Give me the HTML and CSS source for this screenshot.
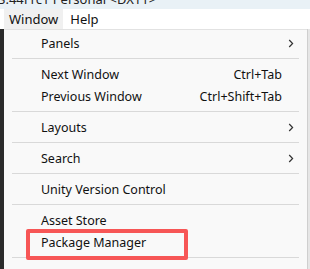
FILE: index.html
```html
<!DOCTYPE html>
<html>
<head>
    <title>Window Menu</title>
    <link rel="stylesheet" href="styles.css">
</head>
<body>
    <div class="titlebar"><span>3.44f1c1 Personal &lt;DX11&gt;</span></div>

    <div class="menubar">
        <span class="mb-item active">Window</span>
        <span class="mb-item">Help</span>
    </div>

    <div class="workspace">
        <div class="dock"></div>
        <div class="menu">
            <div class="item"><span class="label">Panels</span><span class="key"></span><span class="arrow"><svg width="6" height="9" viewBox="0 0 6 9"><path d="M1.2 1 L4.6 4.5 L1.2 8" fill="none" stroke="#333" stroke-width="1.2"/></svg></span></div>
            <div class="sep"></div>
            <div class="item"><span class="label">Next Window</span><span class="key">Ctrl+Tab</span><span class="arrow"></span></div>
            <div class="item"><span class="label">Previous Window</span><span class="key">Ctrl+Shift+Tab</span><span class="arrow"></span></div>
            <div class="sep"></div>
            <div class="item"><span class="label">Layouts</span><span class="key"></span><span class="arrow"><svg width="6" height="9" viewBox="0 0 6 9"><path d="M1.2 1 L4.6 4.5 L1.2 8" fill="none" stroke="#333" stroke-width="1.2"/></svg></span></div>
            <div class="sep"></div>
            <div class="item"><span class="label">Search</span><span class="key"></span><span class="arrow"><svg width="6" height="9" viewBox="0 0 6 9"><path d="M1.2 1 L4.6 4.5 L1.2 8" fill="none" stroke="#333" stroke-width="1.2"/></svg></span></div>
            <div class="sep"></div>
            <div class="item"><span class="label">Unity Version Control</span><span class="key"></span><span class="arrow"></span></div>
            <div class="sep"></div>
            <div class="item"><span class="label">Asset Store</span><span class="key"></span><span class="arrow"></span></div>
            <div class="item"><span class="label">Package Manager</span><span class="key"></span><span class="arrow"></span></div>
            <div class="sep"></div>
            <div class="item"><span class="label">Asset Management</span><span class="key"></span><span class="arrow"></span></div>

            <div class="highlight"></div>
        </div>
        <div class="edge"></div>
    </div>
</body>
</html>
```

FILE: styles.css
```css
body {
    margin: 0;
    width: 310px;
    height: 269px;
    overflow: hidden;
    font-family: "Noto Sans", "Open Sans", sans-serif;
    font-size: 12.5px;
    color: #111;
    background: #2b2b2b;
}
.titlebar {
    height: 9px;
    overflow: hidden;
    background: #e9f1f6;
    color: #222;
    font-size: 13px;
}
.titlebar span {
    display: block;
    line-height: 16px;
    margin-top: -9px;
    margin-left: -2px;
}
.menubar {
    height: 20px;
    display: flex;
    gap: 2px;
    padding-left: 4px;
    background: #ffffff;
}
.mb-item {
    padding: 0 5px;
    line-height: 20px;
    font-size: 13px;
}
.mb-item.active {
    background: #f0f0f0;
}
.workspace {
    display: flex;
    height: 240px;
}
.dock {
    width: 4px;
    background: #2b2b2b;
}
.menu {
    position: relative;
    width: 304px;
    overflow: hidden;
    background: #f9f9f9;
    border-top: 1px solid #e2e2e2;
    padding-top: 2px;
}
.edge {
    width: 2px;
    background: #e6e6e6;
    border-left: 1px solid #cfcfcf;
}
.item {
    display: flex;
    align-items: center;
    height: 22px;
    padding-left: 37px;
    padding-right: 13px;
}
.label {
    flex: 1;
}
.key {
    margin-right: 6px;
}
.arrow {
    width: 6px;
    display: flex;
    align-items: center;
}
.sep {
    height: 1px;
    margin: 4px 8px 4px 8px;
    background: #d9d9d9;
}
.highlight {
    position: absolute;
    left: 22px;
    top: 199px;
    width: 154px;
    height: 23px;
    border: 4px solid #f75656;
    border-radius: 2px;
}
```
